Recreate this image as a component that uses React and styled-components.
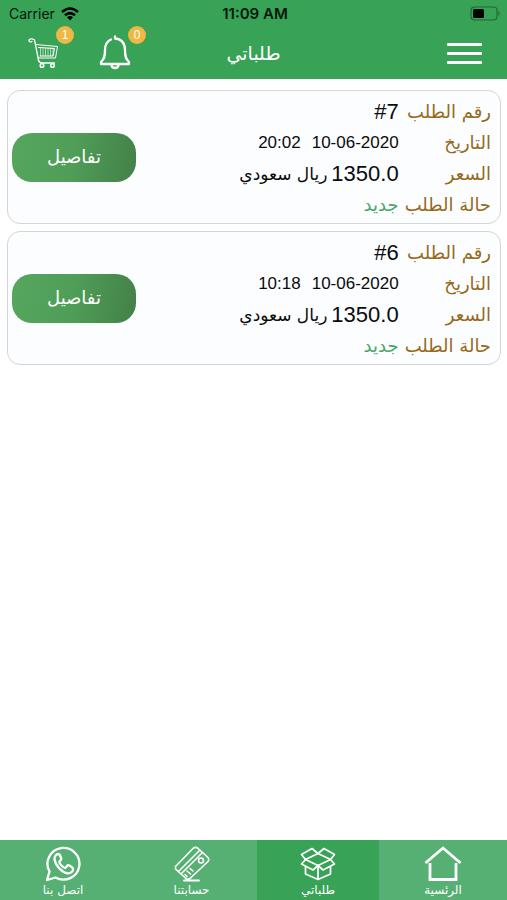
import React from "react";
import styled, { createGlobalStyle, css } from "styled-components";

const GlobalStyle = createGlobalStyle`
  *, *::before, *::after { box-sizing: border-box; }
  body {
    margin: 0;
    background: #fff;
    font-family: "Liberation Sans", "DejaVu Sans", sans-serif;
  }
`;

const Screen = styled.div`
  display: flex;
  flex-direction: column;
  min-height: 100vh;
`;

const Header = styled.header`
  background: #38a256;
`;

const StatusBar = styled.div`
  direction: ltr;
  display: grid;
  grid-template-columns: 1fr auto 1fr;
  align-items: center;
  height: 27px;
  padding: 0 6px 0 9px;
  font: 400 14px/27px Inter, sans-serif;
  color: #06170b;
`;

const Carrier = styled.span`
  display: flex;
  align-items: center;
  gap: 6px;
`;

const Clock = styled.time`
  font-size: 15px;
  font-weight: 600;
`;

const Battery = styled.svg`
  justify-self: end;
`;

const NavBar = styled.nav`
  display: grid;
  grid-template-columns: 1fr auto 1fr;
  align-items: center;
  height: 52px;
  padding: 0 25px;
`;

const MenuButton = styled.button`
  display: flex;
  flex-direction: column;
  gap: 6px;
  width: 35px;
  padding: 0;
  border: 0;
  background: none;
`;

const MenuLine = styled.span`
  width: 100%;
  height: 3px;
  border-radius: 1px;
  background: #fff;
`;

const Title = styled.h1`
  margin: 0;
  font: 400 19px/28px "DejaVu Sans", sans-serif;
  color: #fff;
`;

const NavActions = styled.div`
  display: flex;
  justify-content: flex-end;
  gap: 36px;
`;

const IconButton = styled.button`
  position: relative;
  width: 36px;
  height: 36px;
  padding: 0;
  border: 0;
  background: none;
  color: #fff;

  svg { display: block; }
`;

const Badge = styled.span`
  position: absolute;
  top: -9px;
  right: -13px;
  width: 18px;
  height: 18px;
  border-radius: 50%;
  background: #efb743;
  color: #fff;
  font-size: 12px;
  line-height: 18px;
  text-align: center;
`;

const OrderList = styled.main`
  flex: 1;
  display: flex;
  flex-direction: column;
  gap: 7px;
  padding: 11px 6px 11px 7px;
`;

const OrderCard = styled.article`
  display: flex;
  align-items: center;
  justify-content: space-between;
  padding: 0 9px 0 4px;
  border: 1px solid #d3d6d6;
  border-radius: 13px;
  background: #fbfdfe;
`;

const Details = styled.dl`
  display: grid;
  grid-template-columns: auto auto;
  grid-auto-rows: 31px;
  column-gap: 6px;
  align-items: center;
  margin: 0;
  padding: 5px 0 3px;
`;

const Label = styled.dt`
  font: 400 18px/30px "DejaVu Sans", sans-serif;
  color: #96691a;
`;

const Value = styled.dd`
  display: flex;
  align-items: center;
  gap: ${(p) => (p.$kind === "date" ? 11 : 4)}px;
  margin: 0;
  font-size: ${(p) => (p.$kind === "date" ? 17 : 22)}px;
  line-height: 30px;
  color: #0b0b0b;

  ${(p) => p.$kind === "status" && css`
    font: 400 18px/30px "DejaVu Sans", sans-serif;
    color: #4aa567;
  `}
`;

const Currency = styled.span`
  font: 400 17px/30px "DejaVu Sans", sans-serif;
`;

const DetailsButton = styled.button`
  width: 124px;
  height: 49px;
  padding: 0;
  border: 0;
  border-radius: 20px;
  background: linear-gradient(100deg, #57a65e, #4f9d57 50%, #438048);
  color: #fff;
  font: 400 18px/28px "DejaVu Sans", sans-serif;
`;

const TabBar = styled.nav`
  display: grid;
  grid-template-columns: 128fr 122fr 131fr 126fr;
  height: 60px;
  background: #57b073;
`;

const Tab = styled.a`
  display: flex;
  flex-direction: column;
  align-items: center;
  padding-top: 6px;
  background: ${(p) => (p.$active ? "#38a256" : "transparent")};
  color: #fff;
  font: 400 12px/16px "DejaVu Sans", sans-serif;
  text-decoration: none;
`;

const Stroke = styled.svg`
  fill: none;
  stroke: currentColor;
  stroke-width: ${(p) => p.$weight || 2}px;
  stroke-linecap: round;
  stroke-linejoin: round;
`;

const WifiIcon = () => (
  <svg width="18" height="14" viewBox="0 0 18 14" fill="none" stroke="#000" strokeWidth="2.6" aria-hidden="true">
    <path d="M1 5Q9-2 17 5M4 8.300Q9 4 14 8.300" />
    <path d="M9 13.500L6 10.300Q9 7.800 12 10.300Z" fill="#000" stroke="none" />
  </svg>
);

const BatteryIcon = () => (
  <Battery width="31" height="15" viewBox="0 0 31 15" aria-label="بطارية">
    <rect x="1" y="1" width="26" height="13" rx="3.500" fill="none" stroke="#1f6b35" strokeWidth="1.200" />
    <rect x="3" y="3" width="11" height="9" rx="1.500" fill="#000" />
    <path d="M28.500 5Q31 7.500 28.500 10Z" fill="#1f6b35" />
  </Battery>
);

const CartIcon = () => (
  <Stroke width="36" height="36" viewBox="0 0 36 36" $weight={1} aria-hidden="true">
    <path d="M7 6.500C5.500 7.500 3.500 6.500 4 5C4.500 3.500 7.500 3.500 9.500 5L13.500 25C14 27 15 28 17 28H29.500" strokeWidth="1.300" />
    <path d="M10.500 9.500L32.500 11.500L30.500 23H13.500M13.500 12.500L29.500 13.500L28 21H15" />
    <path d="M15.500 13V21M18 13V21M20.500 13V21M23 13V21M25.500 13V21M28 13V21" strokeWidth=".6" />
    <path d="M13.500 23C12.500 25.500 14 28 16 28" />
    <circle cx="17" cy="30.500" r="1.800" strokeWidth="1.500" />
    <circle cx="27.500" cy="30.500" r="1.800" strokeWidth="1.500" />
  </Stroke>
);

const BellIcon = () => (
  <Stroke width="36" height="36" viewBox="0 0 36 36" $weight={2.3} aria-hidden="true">
    <path d="M14 4.500C9.500 6.500 8 10 8 15C8 21 7.500 24 4 27V29H32V27C28.500 24 28 21 28 15C28 8 24 3.500 18 3.500V1.500" />
    <path d="M14.500 30C15 34 21 34 21.500 30" />
  </Stroke>
);

const HomeIcon = () => (
  <Stroke width="38" height="36" viewBox="0 0 38 36" $weight={2.8} aria-hidden="true">
    <path d="M6 17V33.500H32V17M1.500 17L19 2L36.500 17" strokeLinejoin="miter" strokeLinecap="butt" />
  </Stroke>
);

const BoxIcon = () => (
  <Stroke width="36" height="36" viewBox="0 0 36 36" $weight={1.7} aria-hidden="true">
    <path d="M18 7.500L5.500 13.500L18 19.500L30.500 13.500Z" />
    <path d="M5.500 13.500L1.500 8.500L12 2.500L18 7.500L24 2.500L34.500 8.500L30.500 13.500" />
    <path d="M5.500 13.500L1.500 18L13 24L18 19.500L23 24L34.500 18L30.500 13.500" />
    <path d="M5.500 20.500V28L18 33.500L30.500 28V20.500M18 19.500V33.500" />
  </Stroke>
);

const CardIcon = () => (
  <Stroke width="36" height="36" viewBox="0 0 36 36" $weight={1.6} aria-hidden="true">
    <path d="M1.500 20.500L19.500 2Q21.500 .8 23.500 2L34 11.500Q35.500 13.500 34 15.500L16 32.500Q14 34 12 32.500L1.500 23Z" />
    <path d="M4.500 25.500L26 4M7 28L28.500 6.500" />
    <circle cx="27" cy="14.500" r="2.500" />
    <path d="M13 25L16.500 28M16 22.500L19 25M11 28.500L13 30.500" />
    <path d="M10 34.500H25" strokeWidth="1.800" />
  </Stroke>
);

const WhatsAppIcon = () => (
  <Stroke width="36" height="36" viewBox="0 0 36 36" $weight={2.3} aria-hidden="true">
    <path d="M2 34L4.500 25.500A16 15.800 0 1 1 10.500 31.500Z" />
    <path d="M13.500 8C11 8 9.300 10.500 9.500 13.500C10.500 19.500 16.500 26.300 22.500 27.300C25.500 27.800 28.500 25.500 28 22.500C27.900 21.700 24 19 23 19.200C22 19.500 21 22 20 22C18 21.500 14.500 18 14.300 16C14.200 15 16 14.300 16.200 13.300C16.300 12.200 15 8.200 13.500 8Z" />
  </Stroke>
);

const orders = [
  { number: "7", date: "10-06-2020", time: "20:02", price: "1350.0" },
  { number: "6", date: "10-06-2020", time: "10:18", price: "1350.0" },
];

const tabs = [
  { id: "home", label: "الرئسية", Icon: HomeIcon },
  { id: "orders", label: "طلباتي", Icon: BoxIcon, active: true },
  { id: "accounts", label: "حسابتنا", Icon: CardIcon },
  { id: "contact", label: "اتصل بنا", Icon: WhatsAppIcon },
];

const Order = ({ number, date, time, price }) => (
  <OrderCard>
    <Details>
      <Label>رقم الطلب</Label>
      <Value><bdi dir="ltr">#{number}</bdi></Value>
      <Label>التاريخ</Label>
      <Value $kind="date"><bdi>{date}</bdi><bdi>{time}</bdi></Value>
      <Label>السعر</Label>
      <Value>{price}<Currency>ريال سعودي</Currency></Value>
      <Label>حالة الطلب</Label>
      <Value $kind="status">جديد</Value>
    </Details>
    <DetailsButton type="button">تفاصيل</DetailsButton>
  </OrderCard>
);

export default function App() {
  return (
    <Screen dir="rtl" lang="ar">
      <GlobalStyle />
      <Header>
        <StatusBar>
          <Carrier>Carrier <WifiIcon /></Carrier>
          <Clock>11:09 AM</Clock>
          <BatteryIcon />
        </StatusBar>
        <NavBar>
          <MenuButton type="button" aria-label="القائمة">
            <MenuLine /><MenuLine /><MenuLine />
          </MenuButton>
          <Title>طلباتي</Title>
          <NavActions>
            <IconButton type="button" aria-label="الإشعارات"><BellIcon /><Badge>0</Badge></IconButton>
            <IconButton type="button" aria-label="السلة"><CartIcon /><Badge>1</Badge></IconButton>
          </NavActions>
        </NavBar>
      </Header>
      <OrderList>
        {orders.map((order) => <Order key={order.number} {...order} />)}
      </OrderList>
      <TabBar>
        {tabs.map(({ id, label, Icon, active }) => (
          <Tab key={id} href={`#${id}`} $active={active} aria-current={active ? "page" : undefined}>
            <Icon />
            {label}
          </Tab>
        ))}
      </TabBar>
    </Screen>
  );
}
